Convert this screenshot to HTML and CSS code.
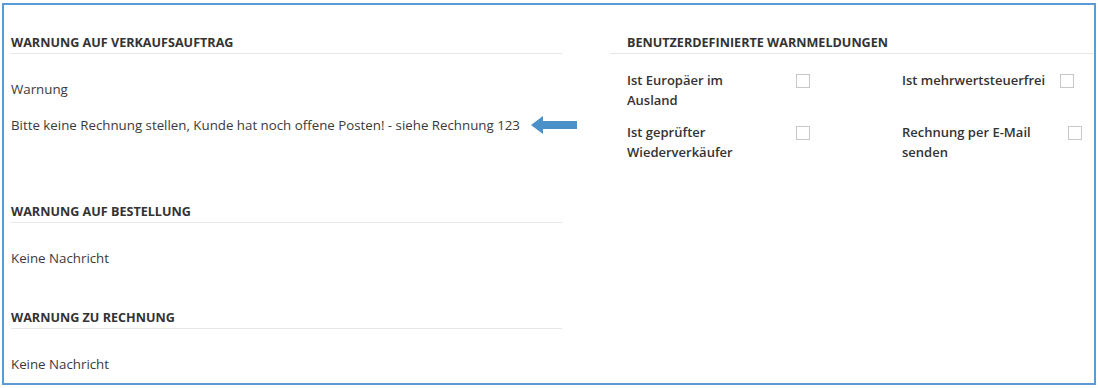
FILE: index.html
```html
<!doctype html>
<html>
    <head>
        <meta charset="UTF-8" />
        <title>Warnungen</title>
        <link rel="stylesheet" href="styles.css">
    </head>
    <body>
        <div class="panel">
            <!-- Left: warnings per document -->
            <div class="col-left">
                <div class="section section-first">
                    <div class="section-header">Warnung auf Verkaufsauftrag</div>
                    <div class="message">Warnung</div>
                    <div class="message message-row">
                        <span>Bitte keine Rechnung stellen, Kunde hat noch offene Posten! - siehe Rechnung 123</span>
                        <svg class="arrow" viewBox="0 0 46 18" xmlns="http://www.w3.org/2000/svg">
                            <path fill="#4a90c9" d="M0 9 L12 0 L12 5 L46 5 L46 13 L12 13 L12 18 Z" />
                        </svg>
                    </div>
                </div>

                <div class="section section-second">
                    <div class="section-header">Warnung auf Bestellung</div>
                    <div class="message">Keine Nachricht</div>
                </div>

                <div class="section">
                    <div class="section-header">Warnung zu Rechnung</div>
                    <div class="message">Keine Nachricht</div>
                </div>
            </div>

            <!-- Right: custom warnings -->
            <div class="col-right">
                <div class="section section-first">
                    <div class="section-header section-header-wide">Benutzerdefinierte Warnmeldungen</div>
                    <div class="flags">
                        <div class="flag">
                            <div class="flag-label">Ist Europäer im Ausland</div>
                            <span class="checkbox"></span>
                        </div>
                        <div class="flag flag-second">
                            <div class="flag-label">Ist mehrwertsteuerfrei</div>
                            <span class="checkbox"></span>
                        </div>
                        <div class="flag">
                            <div class="flag-label">Ist geprüfter Wiederverkäufer</div>
                            <span class="checkbox"></span>
                        </div>
                        <div class="flag flag-second">
                            <div class="flag-label">Rechnung per E-Mail senden</div>
                            <span class="checkbox checkbox-shift"></span>
                        </div>
                    </div>
                </div>
            </div>
        </div>
    </body>
</html>
```

FILE: styles.css
```css
body {
    font-family: "Open Sans", "Noto Sans", sans-serif;
    margin: 0;
    padding: 0;
    background-color: #ffffff;
    color: #3a3a3a;
    font-size: 13.3px;
}

.panel {
    margin: 3px 2px 0 2px;
    width: 1090px;
    height: 378px;
    border: 2px solid #5b9bd5;
    display: flex;
    overflow: hidden;
}

.col-left {
    width: 551px;
    padding-left: 7px;
}

.col-right {
    flex: 1;
    margin-left: 48px;
}

.section-first {
    margin-top: 30px;
}

.section-header {
    font-size: 12.6px;
    font-weight: 700;
    text-transform: uppercase;
    color: #333333;
    line-height: 16px;
    padding-bottom: 2px;
    border-bottom: 1px solid #e6e6e6;
    margin-bottom: 26px;
}

.section-header-wide {
    padding-left: 17px;
}

.message {
    line-height: 18px;
    margin-bottom: 18px;
    white-space: nowrap;
}

.section-first .message:last-child {
    margin-bottom: 70px;
}

.section-second .message {
    margin-bottom: 43px;
}

.message-row {
    display: flex;
    align-items: center;
}

.arrow {
    flex-shrink: 0;
    width: 46px;
    height: 18px;
    margin-left: 11px;
}

.flags {
    display: grid;
    grid-template-columns: 275px 1fr;
    row-gap: 12px;
    padding-left: 17px;
    margin-top: -10px;
}

.flag {
    display: flex;
    align-items: flex-start;
}

.flag-label {
    width: 125px;
    font-size: 13px;
    font-weight: 600;
    line-height: 20px;
    color: #333333;
}

.flag-second .flag-label {
    width: 150px;
}

.checkbox {
    display: block;
    width: 12px;
    height: 12px;
    border: 1px solid #c8c8c8;
    margin-top: 4px;
    margin-left: 44px;
}

.flag-second .checkbox {
    margin-left: 8px;
}

.flag-second .checkbox-shift {
    margin-left: 16px;
}
```
